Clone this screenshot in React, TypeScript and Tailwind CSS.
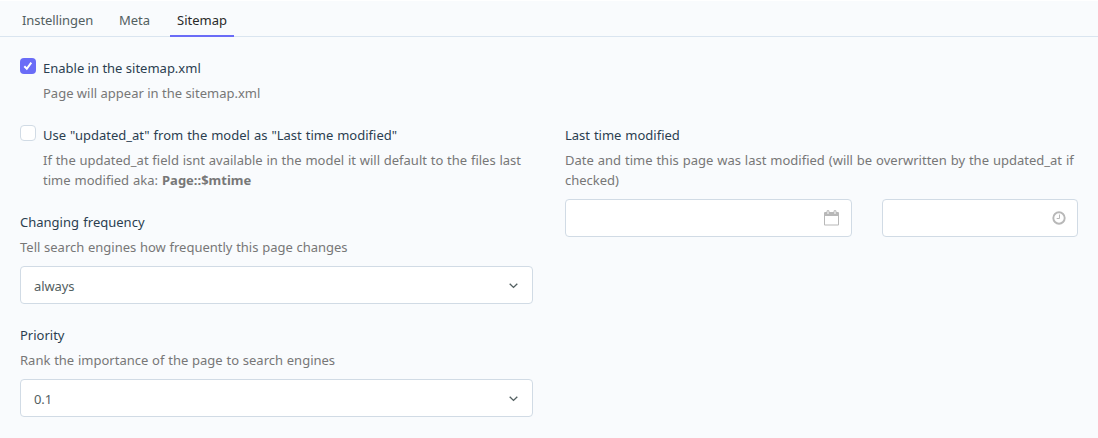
import React from 'react';

function Label({ children, className = '' }: { children: React.ReactNode; className?: string }) {
  return <div className={`h-5 whitespace-nowrap text-[#2b3e50] ${className}`}>{children}</div>;
}

function Chevron() {
  return (
    <svg width="11" height="8" viewBox="0 0 11 8" fill="none" stroke="#536061" strokeWidth="1.4" className="mt-[2px]">
      <path d="M1.700 1.800 L5.500 5.400 L9.300 1.800" />
    </svg>
  );
}

function Select({ value }: { value: string }) {
  return (
    <div className="mt-[9px] flex h-[38px] w-[513px] items-center justify-between rounded border border-[#d1dbe5] bg-white px-[13px]">
      <span className="pt-[2px] tracking-[-0.1px] text-[#536061]">{value}</span>
      <Chevron />
    </div>
  );
}

function CalendarIcon() {
  return (
    <svg width="15" height="16" viewBox="0 0 15 16">
      <path fill="#b8b8b8" fillRule="evenodd" d="M1 2h1.500v-.500Q2.500 0 4 0t1.500 1.500V2h4v-.500Q9.500 0 11 0t1.500 1.500V2H14q1 0 1 1v11.500q0 1-1 1H1q-1 0-1-1V3q0-1 1-1zM1 6v8.500h13V6zM3.500 1.300v2.700h1V1.300zM10.500 1.300v2.700h1V1.300z" />
    </svg>
  );
}

function ClockIcon() {
  return (
    <svg width="14" height="14" viewBox="0 0 14 14" fill="none" stroke="#b8b8b8">
      <circle cx="7" cy="7" r="5.700" strokeWidth="1.900" />
      <path d="M7.500 3.500v4H4.700" strokeWidth="1" />
    </svg>
  );
}

export default function App() {
  return (
    <div className="h-[438px] w-[1098px] overflow-hidden border-t border-white bg-[#f9fbfd] font-['Noto_Sans',sans-serif] text-[13px] leading-5 text-[#777777]">
      <nav className="flex h-[36px] border-b border-[#dae5f0] pl-[14px] text-[#536061]">
        <div className="w-[98px] pl-2 pt-[9px] tracking-[-0.08px]">Instellingen</div>
        <div className="w-[58px] pl-[7px] pt-[9px]">Meta</div>
        <div className="h-[36px] w-[64px] border-b-2 border-[#6a6cf7] pl-[7px] pt-[9px] text-[#2a2a2a]">Sitemap</div>
      </nav>
      <main className="flex gap-8 pl-5">
        <section className="w-[513px]">
          <div className="flex gap-[7px] pt-[21px]">
            <svg width="16" height="16" viewBox="0 0 16 16">
              <rect width="16" height="16" rx="4" fill="#6a6cf7" />
              <path d="M4.300 8.300 L6.800 10.800 L11.300 4.700" fill="none" stroke="white" strokeWidth="2" />
            </svg>
            <div>
              <Label>Enable in the sitemap.xml</Label>
              <div className="mt-[5px]">Page will appear in the sitemap.xml</div>
            </div>
          </div>
          <div className="mt-[22px] flex gap-[7px]">
            <div className="h-4 w-4 shrink-0 rounded border border-[#d1dbe5] bg-white" />
            <div>
              <Label className="[word-spacing:0.6px]">Use "updated_at" from the model as "Last time modified"</Label>
              <div className="mt-[5px] whitespace-nowrap [word-spacing:0.4px]">
                If the updated_at field isnt available in the model it will default to the files last
                <br />
                <span className="[word-spacing:0.6px]">time modified aka: <b>Page::$mtime</b></span>
              </div>
            </div>
          </div>
          <Label className="mt-[22px] [word-spacing:1px]">Changing frequency</Label>
          <div className="mt-[5px] [word-spacing:0.3px]">Tell search engines how frequently this page changes</div>
          <Select value="always" />
          <Label className="mt-[21px]">Priority</Label>
          <div className="mt-[5px] [word-spacing:0.4px]">Rank the importance of the page to search engines</div>
          <Select value="0.1" />
        </section>
        <section className="w-[513px] pt-[88px]">
          <Label className="[word-spacing:0.5px]">Last time modified</Label>
          <div className="mt-[5px] whitespace-nowrap [word-spacing:0.54px]">
            Date and time this page was last modified (will be overwritten by the updated_at if
            <br />
            checked)
          </div>
          <div className="mt-[9px] flex gap-[30px]">
            <div className="flex h-[38px] w-[287px] items-center justify-end rounded border border-[#d1dbe5] bg-white pr-3">
              <CalendarIcon />
            </div>
            <div className="flex h-[38px] w-[196px] items-center justify-end rounded border border-[#d1dbe5] bg-white pr-[11px]">
              <ClockIcon />
            </div>
          </div>
        </section>
      </main>
    </div>
  );
}
